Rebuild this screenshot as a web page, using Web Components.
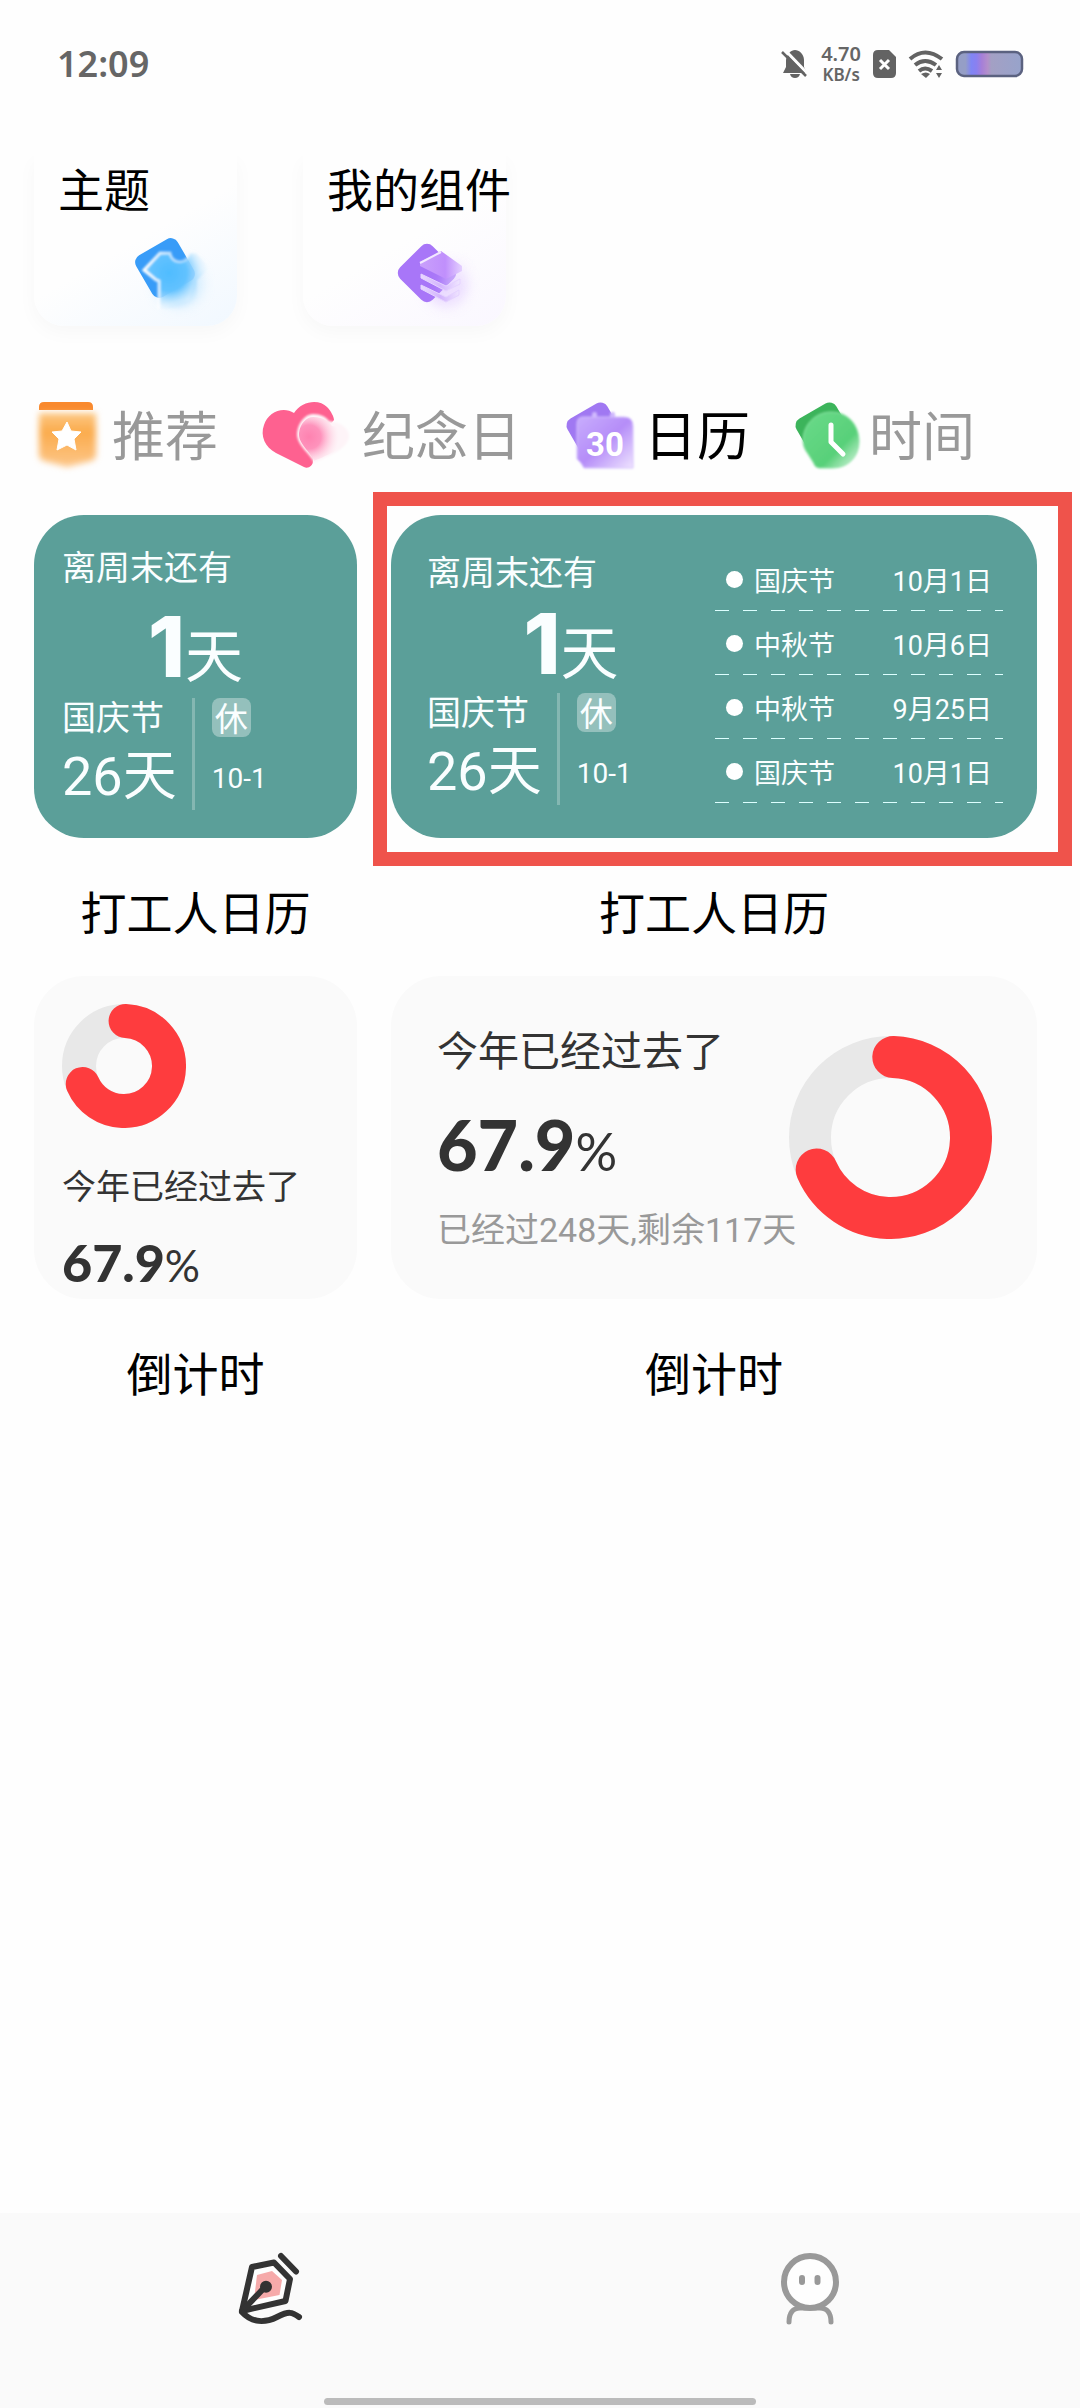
<!DOCTYPE html>
<html lang="zh-CN">
<head>
<meta charset="utf-8">
<meta name="viewport" content="width=device-width, initial-scale=1">
<title>组件</title>
<style>
* { box-sizing: border-box; }

body {
  margin: 0;
  min-height: 100vh;
  display: flex;
  flex-direction: column;
  background: #fefefe;
  color: #000;
  font-family: Roboto, "Noto Sans CJK SC", sans-serif;
  font-size: 46px;
}

main { padding: 32px 43px 0 34px; }

.themes {
  display: flex;
  gap: 66px;
}

.tabs {
  display: flex;
  gap: 43px;
  margin-top: 68px;
}

.widgets {
  display: grid;
  grid-template-columns: minmax(0, 1fr) minmax(0, 2fr);
  column-gap: 34px;
  margin-top: 37px;
}
</style>
</head>
<body>

<status-bar time="12:09" rate="4.70"></status-bar>

<main>
  <section class="themes">
    <theme-tile tint="#f1f8ff"><app-icon slot="icon" name="shirt"></app-icon>主题</theme-tile>
    <theme-tile tint="#faf7ff"><app-icon slot="icon" name="layers"></app-icon>我的组件</theme-tile>
  </section>

  <nav class="tabs">
    <category-tab icon="star">推荐</category-tab>
    <category-tab icon="heart">纪念日</category-tab>
    <category-tab icon="calendar" active>日历</category-tab>
    <category-tab icon="clock">时间</category-tab>
  </nav>

  <section class="widgets" id="widgets">
    <widget-card label="打工人日历" tone="teal">
      <workday-count holiday="国庆节" days="26" date="10-1"></workday-count>
    </widget-card>
    <widget-card label="打工人日历" tone="teal" selected wide>
      <workday-count holiday="国庆节" days="26" date="10-1" wide></workday-count>
      <holiday-list></holiday-list>
    </widget-card>
    <widget-card label="倒计时">
      <year-progress value="67.9"></year-progress>
    </widget-card>
    <widget-card label="倒计时" wide>
      <year-progress value="67.9" passed="248" left="117" wide></year-progress>
    </widget-card>
  </section>
</main>

<bottom-nav></bottom-nav>

<script>
var icons = {
  shirt: [80, 84, `
    <defs>
      <radialGradient id="g" gradientUnits="userSpaceOnUse" cx="36" cy="38" r="40">
        <stop offset="0" stop-color="#4fbcff"/><stop offset=".45" stop-color="#62c2ff"/>
        <stop offset="1" stop-color="#d8efff" stop-opacity="0"/>
      </radialGradient>
      <linearGradient id="w"><stop offset="0" stop-color="#fff"/><stop offset="1" stop-color="#fff" stop-opacity=".2"/></linearGradient>
      <filter id="b" x="-50%" y="-50%" width="200%" height="200%"><feGaussianBlur stdDeviation="7"/></filter>
      <filter id="s" x="-20%" y="-20%" width="140%" height="140%"><feGaussianBlur stdDeviation="1"/></filter>
    </defs>
    <circle cx="46" cy="48" r="22" fill="#a5dbff" opacity=".6" filter="url(#b)"/>
    <rect x="8" y="9" width="48" height="48" rx="8" fill="#389cf8" transform="rotate(-30 32 33)"/>
    <g filter="url(#s)">
      <path d="M11 35 27 18h10c2 11 16 12 20 0h6l8 15-9 12-6 20-28 8-2-27-3-1z" fill="#fefefe" opacity=".5"/>
      <path d="M11 35 27 18h10c2 11 16 12 20 0h6l14 15-13 12v29H26V46l-3-1z" fill="url(#g)"/>
      <path d="M26 74V46l-3-1-12-10 16-17h10c2 11 16 12 20 0h6" fill="none" stroke="url(#w)" stroke-width="3"/>
    </g>`],
  layers: [88, 84, `
    <defs>
      <linearGradient id="g"><stop offset="0" stop-color="#c9a0fb"/><stop offset=".6" stop-color="#c08ffc"/><stop offset="1" stop-color="#e4d0ff"/></linearGradient>
      <linearGradient id="w"><stop offset="0" stop-color="#e8d8ff"/><stop offset=".5" stop-color="#d3b4fd"/><stop offset="1" stop-color="#f0e6ff"/></linearGradient>
      <filter id="b" x="-50%" y="-50%" width="200%" height="200%"><feGaussianBlur stdDeviation="7"/></filter>
    </defs>
    <g transform="translate(0 4)">
      <circle cx="52" cy="46" r="20" fill="#d9bbff" opacity=".6" filter="url(#b)"/>
      <rect x="10" y="11" width="46" height="46" rx="8" fill="#a876f8" transform="rotate(45 33 34)"/>
      <path d="M56 20 74 24 60 62 48 66z" fill="#f6efff" opacity=".5" filter="url(#b)"/>
      <path d="M26 23 47 12 68 27v5L52 40 26 27z" fill="url(#g)"/>
      <path d="M26 24 47 13" stroke="#f2e8ff" stroke-width="2"/>
      <path d="M27 35 52 47 66 40v5L52 52 27 39zM27 46l25 12 13-7v5l-13 7-25-13z" fill="url(#w)" stroke="#e5d3ff"/>
    </g>`],
  star: [78, 72, `
    <defs>
      <linearGradient id="g" x2="0" y2="1"><stop offset="0" stop-color="#fdc883"/><stop offset=".35" stop-color="#fbab4c"/><stop offset="1" stop-color="#fdc78a"/></linearGradient>
      <filter id="b" x="-20%" y="-20%" width="140%" height="140%"><feGaussianBlur stdDeviation="3"/></filter>
    </defs>
    <path d="M5 10V7q0-5 5-5h44q5 0 5 5v3z" fill="#f9892d"/>
    <path d="M5 13h57v42q0 4-5 6l-24 6-23-6q-5-2-5-6z" fill="url(#g)" filter="url(#b)"/>
    <path d="m33 22 4 9 10 1-7 7 2 11-9-5-10 5 2-11-7-7 10-1z" fill="#fff" stroke="#fff" stroke-linejoin="round"/>`],
  heart: [101, 72, `
    <defs>
      <radialGradient id="g" gradientUnits="userSpaceOnUse" cx="48" cy="37" r="30">
        <stop offset="0" stop-color="#fe82b0"/><stop offset=".4" stop-color="#fe93bc"/><stop offset="1" stop-color="#ffdce8" stop-opacity="0"/>
      </radialGradient>
      <filter id="b" x="-30%" y="-30%" width="160%" height="160%"><feGaussianBlur stdDeviation="1"/></filter>
    </defs>
    <path d="M33 13C41 0 59-1 66 7c4 4 7 10 7 13l-5 6-16 28v7c0 5-5 8-9 6L15 53C4 47-1 36 3 25 7 12 22 6 33 13z" fill="#fe6190"/>
    <path d="M52 14c8 0 13 3 16 7 12 1 20 8 20 15 0 12-20 20-35 27-3-9-18-18-17-30 1-10 8-19 16-19z" fill="#fef4f8" filter="url(#b)"/>
    <path d="M52 17c12 0 17 6 19 9 9 1 17 4 17 9 0 12-21 20-35 26-3-9-16-17-15-28 1-9 7-16 14-16z" fill="url(#g)"/>`],
  calendar: [80, 72, `
    <defs>
      <linearGradient id="g" x2="1" y2="1"><stop offset="0" stop-color="#c8adfd"/><stop offset=".5" stop-color="#b58df8"/><stop offset="1" stop-color="#efe4ff"/></linearGradient>
      <filter id="b" x="-20%" y="-20%" width="140%" height="140%"><feGaussianBlur stdDeviation="1"/></filter>
    </defs>
    <rect x="8" y="8" width="46" height="46" rx="8" fill="#a078f2" transform="rotate(-30 31 31)"/>
    <g filter="url(#b)">
      <rect x="28" y="12" width="5" height="10" rx="2" fill="#cfb8fd"/>
      <rect x="46" y="12" width="5" height="10" rx="2" fill="#cfb8fd"/>
      <path d="M19 17h41q9 0 9 9v42H20q-3-6-7-9V24q0-7 6-7z" fill="url(#g)" stroke="#d5c0fd"/>
    </g>
    <text x="41" y="56" text-anchor="middle" font-family="Roboto, sans-serif" font-weight="700" font-size="33" fill="#fff">30</text>`],
  clock: [76, 72, `
    <defs>
      <linearGradient id="g" x2="1" y2="1"><stop offset="0" stop-color="#6bdb8a"/><stop offset=".65" stop-color="#58d079"/><stop offset="1" stop-color="#e2f9e8"/></linearGradient>
      <filter id="b" x="-20%" y="-20%" width="140%" height="140%"><feGaussianBlur stdDeviation="1"/></filter>
    </defs>
    <rect x="8" y="8" width="46" height="46" rx="8" fill="#3cb45b" transform="rotate(-30 31 31)"/>
    <path d="M38 12c17 0 28 13 28 29S55 68 39 68H26q-4 0-6-6l-5-8c-3-4-5-8-5-13 0-16 12-29 28-29z" fill="url(#g)" stroke="#8be3a4" filter="url(#b)"/>
    <path d="M38 25v17l12 12" fill="none" stroke="#fff" stroke-width="5" stroke-linecap="round" stroke-linejoin="round"/>`],
  pen: [70, 86, `
    <g transform="translate(-35 -45)" fill="none" stroke="#333" stroke-width="6" stroke-linecap="round" stroke-linejoin="round">
      <path d="M52 67 74 62.500 90 79 85.500 101 42 111z" fill="#fefefe"/>
      <path d="M57 75 72 71 82 80 79.500 95 54 100z" fill="#f6aaaa" stroke="none"/>
      <path d="M42 111 65 87" />
      <circle cx="66" cy="86.700" r="3"/>
      <path d="M81 56 96 71.500M42 112C52 123 65 123 77 117S92 112 99 117"/>
    </g>`],
  person: [70, 86, `
    <g transform="translate(-35 -45)" fill="none" stroke="#999" stroke-width="6" stroke-linecap="round">
      <circle cx="70" cy="82" r="26" fill="#fefefe"/>
      <path d="M62 78v4M77.500 78v4"/>
      <path d="M49 122c0-9 4-14 11-14h20c7 0 11 5 11 14" stroke-width="5"/>
    </g>`],
  mute: [28, 30, `
    <path d="M5 11C6 5 10 1 14 1s9 4 9 10v7l3 6H2l3-6zM9 25h10q-1 4-5 4t-5-4z" fill="#636363"/>
    <path d="M2-1 28 26" stroke="#fefefe" stroke-width="3"/>
    <path d="M1 3 25 27" stroke="#636363" stroke-width="2.500"/>`],
  sim: [23, 28, `
    <path d="M5 0h11l7 7v16q0 5-5 5H5q-5 0-5-5V5q0-5 5-5z" fill="#636363"/>
    <path d="m7 10 9 9m0-9-9 9" stroke="#fff" stroke-width="3"/>`],
  wifi: [36, 28, `
    <g fill="none" stroke="#636363" stroke-width="4">
      <path d="M2 9q15-13 32 0M7 15q10-8 21 0M11 21q6-5 13 0"/>
    </g>
    <path d="M13 24q5-3 9 0l-4 4zM28 20l3-5 3 5zM28 23l3 5 3-5z" fill="#636363"/>`],
  battery: [67, 26, `
    <defs><linearGradient id="g"><stop offset="0" stop-color="#959ec6"/><stop offset=".13" stop-color="#959ec6"/>
      <stop offset=".22" stop-color="#8085f5"/><stop offset=".3" stop-color="#8a80f0"/><stop offset=".38" stop-color="#a67fd8"/>
      <stop offset=".47" stop-color="#b38fcb"/><stop offset=".53" stop-color="#a3a0c4"/><stop offset="1" stop-color="#97a3cb"/></linearGradient></defs>
    <rect x="1" y="1" width="65" height="24" rx="7" fill="url(#g)" stroke="#5b6280" stroke-width="2.500"/>`]
};

class AppIcon extends HTMLElement {
  constructor() {
    super();
    this.attachShadow({ mode: "open" });
  }

  static get observedAttributes() {
    return ["name"];
  }

  attributeChangedCallback() {
    var [ w, h, body ] = icons[this.getAttribute("name")];
    this.shadowRoot.innerHTML = `
<style>
:host { display: block; flex: none; }
svg { display: block; overflow: visible; }
</style>
<svg width="${w}" height="${h}" viewBox="0 0 ${w} ${h}" aria-hidden="true">${body}</svg>`;
  }
}

class StatusBar extends HTMLElement {
  constructor() {
    super();
    this.attachShadow({ mode: "open" }).innerHTML = `
<style>
:host {
  display: flex;
  align-items: center;
  justify-content: space-between;
  height: 124px;
  padding: 4px 57px 0;
  color: #666;
  font: 600 36px/44px "Noto Sans", sans-serif;
}
.icons { display: flex; align-items: center; gap: 12px; }
.rate { font-size: 20px; line-height: 21px; text-align: center; }
.rate small { display: block; font-size: 17px; }
</style>
<time>${this.getAttribute("time")}</time>
<div class="icons">
  <app-icon name="mute"></app-icon>
  <div class="rate">${this.getAttribute("rate")}<small>KB/s</small></div>
  <app-icon name="sim"></app-icon>
  <app-icon name="wifi"></app-icon>
  <app-icon name="battery"></app-icon>
</div>`;
  }
}

class ThemeTile extends HTMLElement {
  constructor() {
    super();
    this.attachShadow({ mode: "open" }).innerHTML = `
<style>
:host { display: block; clip-path: inset(0 -40px -40px -40px); }
button {
  display: flex;
  flex-direction: column;
  align-items: flex-start;
  width: 203px;
  height: 170px;
  padding: 5px 24px 0;
  border: 0;
  border-radius: 0 0 30px 30px;
  background: linear-gradient(150deg, #fefefe 50%, ${this.getAttribute("tint")});
  box-shadow: 0 6px 20px rgba(0, 0, 0, .03);
  color: inherit;
  font: inherit;
  line-height: 60px;
  white-space: nowrap;
}
::slotted(app-icon) { align-self: flex-end; margin-top: 14px; }
</style>
<button type="button"><slot></slot><slot name="icon"></slot></button>`;
  }
}

class CategoryTab extends HTMLElement {
  constructor() {
    super();
    this.attachShadow({ mode: "open" }).innerHTML = `
<style>
:host { display: block; color: #999; }
:host([active]) { color: #000; }
button {
  display: flex;
  align-items: center;
  padding: 0;
  border: 0;
  background: none;
  color: inherit;
  font: inherit;
  font-size: 53px;
  line-height: 80px;
  white-space: nowrap;
}
span { padding-top: 4px; }
</style>
<button type="button"><app-icon name="${this.getAttribute("icon")}"></app-icon><span><slot></slot></span></button>`;
  }
}

class WidgetCard extends HTMLElement {
  constructor() {
    super();
    this.attachShadow({ mode: "open" }).innerHTML = `
<style>
:host { display: block; }
figure { margin: 0; position: relative; }
.face {
  box-sizing: border-box;
  height: 323px;
  border-radius: 50px;
  background: #fafafa;
  overflow: hidden;
}
:host([tone=teal]) .face { background: #5b9f99; color: #fafeff; }
:host([tone=teal][wide]) .face {
  display: grid;
  grid-template-columns: 1fr 1fr;
  padding: 0 34px 0 36px;
}
/* selection frame, drawn round the card */
.frame { display: none; }
:host([selected]) .frame {
  display: block;
  position: absolute;
  inset: -23px -35px auto -18px;
  height: 346px;
  border: 14px solid #ef534b;
}
figcaption {
  padding: 41px 0 27px;
  line-height: 70px;
  text-align: center;
}
</style>
<figure>
  <div class="face"><slot></slot></div>
  <div class="frame"></div>
  <figcaption>${this.getAttribute("label")}</figcaption>
</figure>`;
  }
}

class WorkdayCount extends HTMLElement {
  constructor() {
    super();
    this.attachShadow({ mode: "open" }).innerHTML = `
<style>
:host {
  box-sizing: border-box;
  display: flex;
  flex-direction: column;
  height: 323px;
  padding: 31px 28px 28px;
  font-size: 34px;
  line-height: 44px;
}
:host([wide]) { padding: 36px 0 33px; }
.count {
  flex: 1;
  display: flex;
  align-items: baseline;
  justify-content: center;
  padding-top: 19px;
  font-size: 58px;
  line-height: 76px;
}
:host([wide]) .count { padding-top: 11px; }
.count b { font: 800 84px/76px Inter, sans-serif; }
.next { display: flex; gap: 15px; height: 112px; }
.name { line-height: 40px; }
.days { font-size: 54px; line-height: 78px; }
.side {
  display: flex;
  flex-direction: column;
  gap: 20px;
  padding-left: 17px;
  border-left: 3px solid rgba(255, 255, 255, .25);
  font-size: 28px;
}
.off {
  width: 39px;
  height: 39px;
  border-radius: 8px;
  background: rgba(255, 255, 255, .35);
  font-size: 33px;
  text-align: center;
}
</style>
<div>离周末还有</div>
<div class="count"><b>1</b>天</div>
<div class="next">
  <div>
    <div class="name">${this.getAttribute("holiday")}</div>
    <div class="days">${this.getAttribute("days")}天</div>
  </div>
  <div class="side">
    <div class="off">休</div>
    <div>${this.getAttribute("date")}</div>
  </div>
</div>`;
  }
}

var holidays = [
  ["国庆节", "10月1日"],
  ["中秋节", "10月6日"],
  ["中秋节", "9月25日"],
  ["国庆节", "10月1日"]
];

class HolidayList extends HTMLElement {
  constructor() {
    super();
    var rows = holidays.map(([ name, date ]) => `<li><span>${name}</span><time>${date}</time></li>`);
    this.attachShadow({ mode: "open" }).innerHTML = `
<style>
:host { display: block; padding-top: 32px; font-size: 27px; }
ul { margin: 0; padding: 0; list-style: none; }
li {
  box-sizing: border-box;
  display: flex;
  align-items: center;
  gap: 11px;
  height: 64px;
  padding: 0 11px;
  background: repeating-linear-gradient(90deg, #dff 0 14px, transparent 14px 28px) bottom / 100% 1px no-repeat;
}
li::before {
  content: "";
  width: 17px;
  height: 17px;
  border-radius: 50%;
  background: #fff;
}
time { margin-left: auto; }
</style>
<ul>${rows.join("")}</ul>`;
  }
}

class ProgressRing extends HTMLElement {
  constructor() {
    super();
    this.attachShadow({ mode: "open" });
  }

  connectedCallback() {
    var size = this.getAttribute("size") * 1;
    var stroke = this.getAttribute("stroke") * 1;
    var mid = size / 2;
    var r = (size - stroke) / 2;
    this.shadowRoot.innerHTML = `
<style>
:host { display: block; flex: none; }
svg { display: block; }
circle { fill: none; stroke: #e8e8e8; stroke-width: ${stroke}px; }
.bar { stroke: #fe3c3e; stroke-linecap: round; }
</style>
<svg width="${size}" height="${size}" role="img" aria-label="${this.getAttribute("value")}%">
  <circle cx="${mid}" cy="${mid}" r="${r}"/>
  <circle class="bar" cx="${mid}" cy="${mid}" r="${r}" pathLength="100"
    stroke-dasharray="${this.getAttribute("value")} 100" transform="rotate(-88 ${mid} ${mid})"/>
</svg>`;
  }
}

class YearProgress extends HTMLElement {
  constructor() {
    super();
    var value = this.getAttribute("value");
    var wide = this.hasAttribute("wide");
    this.attachShadow({ mode: "open" }).innerHTML = `
<style>
:host {
  box-sizing: border-box;
  display: flex;
  flex-direction: column;
  gap: 37px;
  height: 323px;
  padding: 28px;
  color: #333;
  font-size: 34px;
  line-height: 44px;
  white-space: nowrap;
}
:host([wide]) {
  flex-direction: row-reverse;
  align-items: center;
  padding: 0 45px 0 46px;
  gap: 0;
}
.text { flex: 1; min-width: 0; }
.value { margin-top: 19px; font-family: Lato, sans-serif; font-size: 44px; line-height: 68px; }
.value b { font-size: 52px; font-weight: 900; }
:host([wide]) .title { font-size: 41px; line-height: 56px; }
:host([wide]) .value { margin-top: 28px; font-size: 52px; line-height: 72px; }
:host([wide]) .value b { font-size: 70px; }
.note { margin-top: 21px; color: #999; }
</style>
<progress-ring value="${value}" size="${wide ? 203 : 124}" stroke="${wide ? 42 : 34}"></progress-ring>
<div class="text">
  <div class="title">今年已经过去了</div>
  <div class="value"><b>${value}</b>%</div>
  ${wide ? `<div class="note">已经过${this.getAttribute("passed")}天,剩余${this.getAttribute("left")}天</div>` : ""}
</div>`;
  }
}

class BottomNav extends HTMLElement {
  constructor() {
    super();
    this.attachShadow({ mode: "open" }).innerHTML = `
<style>
:host {
  display: flex;
  flex-direction: column;
  justify-content: space-between;
  align-items: center;
  height: 195px;
  margin-top: auto;
  background: #fafafa;
}
nav { display: flex; width: 100%; padding-top: 32px; }
a { flex: 1; display: flex; justify-content: center; }
.home { width: 40%; height: 7px; margin-bottom: 3px; border-radius: 4px; background: #bbb; }
</style>
<nav>
  <a href="#widgets" aria-label="组件"><app-icon name="pen"></app-icon></a>
  <a href="#me" aria-label="我的"><app-icon name="person"></app-icon></a>
</nav>
<div class="home"></div>`;
  }
}

customElements.define("app-icon", AppIcon);
customElements.define("status-bar", StatusBar);
customElements.define("theme-tile", ThemeTile);
customElements.define("category-tab", CategoryTab);
customElements.define("progress-ring", ProgressRing);
customElements.define("widget-card", WidgetCard);
customElements.define("workday-count", WorkdayCount);
customElements.define("holiday-list", HolidayList);
customElements.define("year-progress", YearProgress);
customElements.define("bottom-nav", BottomNav);
</script>
</body>
</html>
